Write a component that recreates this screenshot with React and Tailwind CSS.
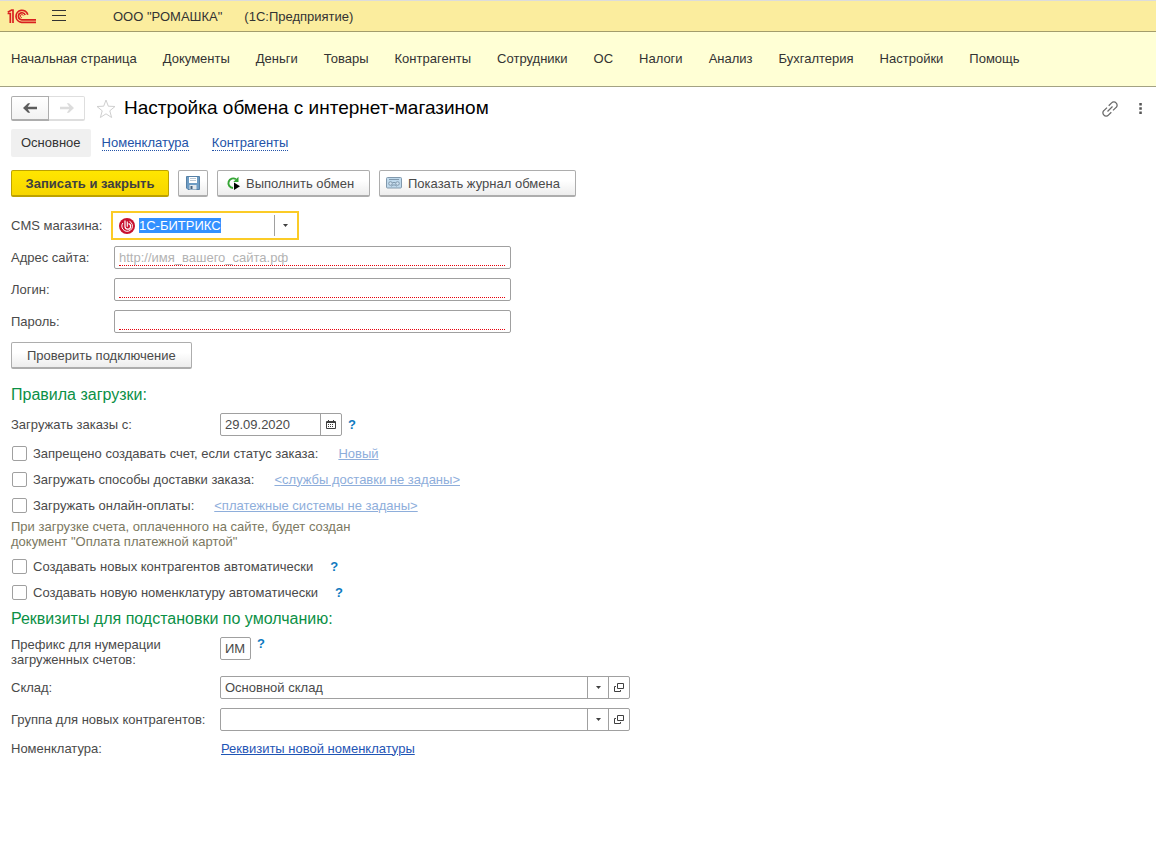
import { useState } from 'react';

const menu = [
  'Начальная страница', 'Документы', 'Деньги', 'Товары', 'Контрагенты', 'Сотрудники',
  'ОС', 'Налоги', 'Анализ', 'Бухгалтерия', 'Настройки', 'Помощь',
];

const btn = 'flex items-center h-[27px] rounded-[2px] border border-b-2 border-[#adadad] bg-gradient-to-b from-white from-40% to-[#ededed] text-[#4a4a4a]';

function Logo() {
  return (
    <svg width="30" height="16" viewBox="0 0 30 16" fill="none" stroke="#d9201f" strokeWidth="1.7">
      <path d="M0.600 5.500H3.300V15" />
      <path d="M0.800 4.300L4.600 2H6V15" />
      <path d="M20.800 6.800A6 6 0 1 0 14.600 14.300H29" />
      <path d="M18.200 7A3.500 3.500 0 1 0 14.800 11.800H29" />
      <path d="M16.300 7.600A1.500 1.500 0 1 0 14.800 9.600" strokeWidth="1" />
    </svg>
  );
}

function Caret() {
  return (
    <svg width="5" height="3" viewBox="0 0 5 3" fill="#404040">
      <path d="M0 0h5L2.5 3z" />
    </svg>
  );
}

function Arrow({ color, flip }) {
  return (
    <svg width="14" height="10" viewBox="0 0 14 10" fill={color} className={flip ? 'rotate-180' : ''}>
      <path d="M0 5L5 0.300H7.200L4.700 3.700H14V6.300H4.700L7.200 9.700H5z" />
    </svg>
  );
}

function Help() {
  return <button type="button" aria-label="Справка" className="text-[13px] font-bold leading-[13px] text-[#0f7ac0]">?</button>;
}

function TextField({ id, label, type = 'text', placeholder }) {
  return (
    <div className="flex items-center">
      <label htmlFor={id} className="w-[103px] shrink-0">{label}</label>
      <div className="flex h-[23px] w-full max-w-[397px] rounded-[2px] border border-[#a0a0a0] pr-[5px] pb-[2px] pl-1">
        <input
          id={id}
          type={type}
          placeholder={placeholder}
          className="w-full border-b border-dotted border-red-600 pt-[2px] outline-none placeholder:text-[#b3b3b3]"
        />
      </div>
    </div>
  );
}

function RefField({ id, label, value }) {
  return (
    <div className="flex items-center">
      <label htmlFor={id} className="w-[209px] shrink-0">{label}</label>
      <div className="flex h-[23px] w-full max-w-[410px] divide-x divide-[#a0a0a0] rounded-[2px] border border-[#a0a0a0]">
        <div className="relative flex-1">
          <select id={id} defaultValue={value} className="h-full w-full appearance-none pl-1 outline-none">
            <option>{value}</option>
          </select>
          <span className="pointer-events-none absolute inset-y-0 right-0 flex w-[21px] items-center justify-center border-l border-[#a0a0a0]">
            <Caret />
          </span>
        </div>
        <button type="button" aria-label="Открыть" className="flex w-5 items-center justify-center">
          <svg width="10" height="10" viewBox="0 0 10 10" fill="none" stroke="#404040">
            <path d="M3.500 0.500h6v5h-6z M2 3.500H0.500v5h6V7" />
          </svg>
        </button>
      </div>
    </div>
  );
}

function Check({ label, children }) {
  const [checked, setChecked] = useState(false);
  return (
    <div className="flex h-[26px] items-center">
      <label className="flex items-center gap-[6px]">
        <input
          type="checkbox"
          checked={checked}
          onChange={(e) => setChecked(e.target.checked)}
          className="ml-px size-[15px] appearance-none rounded-[2px] border border-[#a0a0a0] checked:bg-[#ffdc00]"
        />
        {label}
      </label>
      {children}
    </div>
  );
}

export default function App() {
  return (
    <div className="min-h-screen bg-white font-['Liberation_Sans',Arial,sans-serif] text-[13px] leading-[15px] text-[#4a4a4a]">
      <header className="flex h-8 items-center border-t border-b border-t-[#dcdcdc] border-b-[#a39d6c] bg-[#fbed9e] pl-[7px] text-[#333]">
        <Logo />
        <button type="button" aria-label="Меню" className="ml-[15px]">
          <svg width="14" height="12" viewBox="0 0 14 12" stroke="#333">
            <path d="M0 0.5h14M0 5.5h14M0 10.5h14" />
          </svg>
        </button>
        <span className="ml-[47px]">ООО "РОМАШКА"</span>
        <span className="ml-[22px]">(1С:Предприятие)</span>
      </header>

      <nav className="flex h-[55px] items-center gap-[26px] border-b border-[#a3a283] bg-[#ffffd5] px-[11px] pb-[2px] text-[#333]">
        {menu.map((item) => (
          <a key={item} href="#" className="whitespace-nowrap">{item}</a>
        ))}
      </nav>

      <main className="px-[11px] pt-[9px]">
        <div className="flex h-[25px] items-center">
          <div className="flex h-[25px]">
            <button type="button" aria-label="Назад" className="flex w-[38px] items-center justify-center rounded-l-[2px] border border-b-2 border-[#adadad] bg-gradient-to-b from-white to-[#f2f2f2]">
              <Arrow color="#5c5c5c" />
            </button>
            <button type="button" aria-label="Вперед" className="flex w-9 items-center justify-center rounded-r-[2px] border border-b-2 border-l-0 border-[#dedede]">
              <Arrow color="#dcdcdc" flip />
            </button>
          </div>
          <button type="button" aria-label="В избранное" className="ml-[11px]">
            <svg width="20" height="20" viewBox="0 0 20 20" fill="none" stroke="#cfcfcf">
              <path d="M10 1l2.300 6.200 6.700 0.300-5.200 4.300 1.800 6.700-5.600-3.700-5.600 3.700 1.800-6.700L1 7.500l6.700-0.300z" />
            </svg>
          </button>
          <h1 className="ml-2 pb-[2px] text-[19px] leading-[22px] text-black">Настройка обмена с интернет-магазином</h1>
          <button type="button" aria-label="Получить ссылку" className="ml-auto">
            <svg width="16" height="16" viewBox="0 0 16 16" fill="none" stroke="#6a6a6a" strokeWidth="1.300">
              <path d="M5.500 10.500l5-5" />
              <path d="M6.700 4.800L9.600 1.900a3 3 0 0 1 4.500 0a3 3 0 0 1 0 4.500L11 9.400" />
              <path d="M9.300 11.200L6.400 14.100a3 3 0 0 1-4.500 0a3 3 0 0 1 0-4.500L5 6.600" />
            </svg>
          </button>
          <button type="button" aria-label="Еще" className="mr-[3px] ml-[21px]">
            <svg width="3" height="11" viewBox="0 0 3 11" fill="#555">
              <path d="M0.300 0h2.500v2.500h-2.500zM0.300 4.200h2.500v2.500h-2.500zM0.300 8.400h2.500v2.500h-2.500z" />
            </svg>
          </button>
        </div>

        <div className="mt-2 flex h-7 items-center">
          <a href="#" className="flex h-7 items-center rounded-[2px] bg-[#f0f0f0] px-[10px] pb-[2px] text-[#333]">Основное</a>
          <a href="#" className="ml-[11px] border-b border-dotted border-[#2353a8] text-[#2353a8]">Номенклатура</a>
          <a href="#" className="ml-[23px] border-b border-dotted border-[#2353a8] text-[#2353a8]">Контрагенты</a>
        </div>

        <div className="mt-[13px] flex gap-[9px]">
          <button type="button" className="h-[27px] min-w-[158px] rounded-[2px] border border-b-2 border-[#bda200] bg-gradient-to-b from-[#ffe600] to-[#f7d600] px-3 font-bold text-[#404040]">
            Записать и закрыть
          </button>
          <button type="button" aria-label="Записать" className={`${btn} w-[30px] justify-center`}>
            <svg width="14" height="14" viewBox="0 0 14 14">
              <path d="M0.500 0.500h13v13H2l-1.500-1.500z" fill="#6d9cc4" stroke="#5580a6" />
              <path d="M3 1h8v6H3z" fill="#fff" />
              <path d="M4 2.500h6M4 4.500h6" stroke="#b9c6d2" />
              <path d="M3.500 9h7v4.500h-7z" fill="#dfe6ec" />
              <path d="M4.500 10h2v3h-2z" fill="#44627f" />
            </svg>
          </button>
          <button type="button" className={`${btn} min-w-[153px] gap-[6px] px-2`}>
            <svg width="14" height="14" viewBox="0 0 14 14">
              <path d="M10 3.300A4.800 4.800 0 1 0 7 12" fill="none" stroke="#35a535" strokeWidth="1.900" />
              <path d="M12.500 0.800v5.200H7.300z" fill="#35a535" />
              <path d="M8 6.500l6 3.700-6 3.800z" fill="#000" />
            </svg>
            Выполнить обмен
          </button>
          <button type="button" className={`${btn} min-w-[197px] gap-[6px] px-[6px]`}>
            <svg width="16" height="12" viewBox="0 0 16 12" fill="none" stroke="#8199ad">
              <rect x="0.500" y="0.500" width="15" height="10.500" rx="1" fill="#bfd9ec" />
              <path d="M3 2.500h10M5.500 9.500l1-1.500h3l1 1.500M6.500 5.500h3" />
              <circle cx="4.500" cy="6.500" r="1.800" fill="#cfe2f0" />
              <circle cx="11.500" cy="6.500" r="1.800" fill="#cfe2f0" />
            </svg>
            Показать журнал обмена
          </button>
        </div>

        <div className="mt-[17px] flex flex-col gap-[9px]">
          <div className="flex items-center">
            <label htmlFor="cms" className="w-[103px] shrink-0">CMS магазина:</label>
            <div className="relative flex h-[23px] w-[182px] items-center gap-1 pl-[5px] outline-2 outline-offset-1 outline-[#fbcb26]">
              <svg width="16" height="16" viewBox="0 0 16 16" fill="none" stroke="#fff">
                <circle cx="8" cy="8" r="8" fill="#c8102e" stroke="none" />
                <path d="M6 2.500V8.500A2.800 2.800 0 1 0 9.500 5.700" strokeWidth="1.200" />
                <path d="M8.300 3.500V8.800" strokeWidth="1.100" />
                <path d="M3.800 5A5.300 5.300 0 1 0 10.500 3.300" strokeWidth="1" />
              </svg>
              <select id="cms" className="h-[15px] appearance-none bg-[#3390ff] text-white outline-none">
                <option>1С-БИТРИКС</option>
              </select>
              <span className="pointer-events-none absolute inset-y-[1px] right-0 flex w-[22px] items-center justify-center border-l border-[#a0a0a0]">
                <Caret />
              </span>
            </div>
          </div>
          <TextField id="site" label="Адрес сайта:" placeholder="http://имя_вашего_сайта.рф" />
          <TextField id="login" label="Логин:" />
          <TextField id="password" label="Пароль:" type="password" />
          <button type="button" className={`${btn} self-start px-[15px]`}>Проверить подключение</button>
        </div>

        <h2 className="mt-4 text-[16px] leading-5 text-[#0b9046]">Правила загрузки:</h2>
        <div className="mt-2 mb-1 flex items-center">
          <label htmlFor="date" className="w-[209px]">Загружать заказы с:</label>
          <div className="mr-[6px] flex h-[23px] w-[122px] divide-x divide-[#a0a0a0] rounded-[2px] border border-[#a0a0a0]">
            <input id="date" defaultValue="29.09.2020" className="w-full min-w-0 pl-1 outline-none" />
            <button type="button" aria-label="Выбрать дату" className="flex w-5 shrink-0 items-center justify-center">
              <svg width="10" height="9" viewBox="0 0 10 9" fill="none" stroke="#404040">
                <path d="M0.500 1.500h9v7h-9zM0 2.500h10M2.500 0v2M7.500 0v2" />
                <path d="M2 4.500h6M2 6.500h6" strokeDasharray="1 1" />
              </svg>
            </button>
          </div>
          <Help />
        </div>
        <Check label="Запрещено создавать счет, если статус заказа:">
          <a href="#" className="ml-5 text-[#8eaedb] underline">Новый</a>
        </Check>
        <Check label="Загружать способы доставки заказа:">
          <a href="#" className="ml-5 text-[#8eaedb] underline">&lt;службы доставки не заданы&gt;</a>
        </Check>
        <Check label="Загружать онлайн-оплаты:">
          <a href="#" className="ml-5 text-[#8eaedb] underline">&lt;платежные системы не заданы&gt;</a>
        </Check>
        <p className="mt-px mb-1 text-[#7b7861]">
          При загрузке счета, оплаченного на сайте, будет создан
          <br />
          документ "Оплата платежной картой"
        </p>
        <Check label="Создавать новых контрагентов автоматически">
          <span className="ml-[17px] flex"><Help /></span>
        </Check>
        <Check label="Создавать новую номенклатуру автоматически">
          <span className="ml-[17px] flex"><Help /></span>
        </Check>

        <h2 className="mt-1 text-[16px] leading-5 text-[#0b9046]">Реквизиты для подстановки по умолчанию:</h2>
        <div className="mt-2 flex flex-col gap-[9px]">
          <div className="flex items-start">
            <label htmlFor="prefix" className="w-[209px]">
              Префикс для нумерации
              <br />
              загруженных счетов:
            </label>
            <input id="prefix" defaultValue="ИМ" className="mr-[6px] h-[23px] w-[31px] rounded-[2px] border border-[#a0a0a0] pl-1 outline-none" />
            <Help />
          </div>
          <RefField id="warehouse" label="Склад:" value="Основной склад" />
          <RefField id="group" label="Группа для новых контрагентов:" value="" />
          <div className="flex h-4 items-center">
            <span className="w-[210px]">Номенклатура:</span>
            <a href="#" className="text-[#1f55b5] underline">Реквизиты новой номенклатуры</a>
          </div>
        </div>
      </main>
    </div>
  );
}
